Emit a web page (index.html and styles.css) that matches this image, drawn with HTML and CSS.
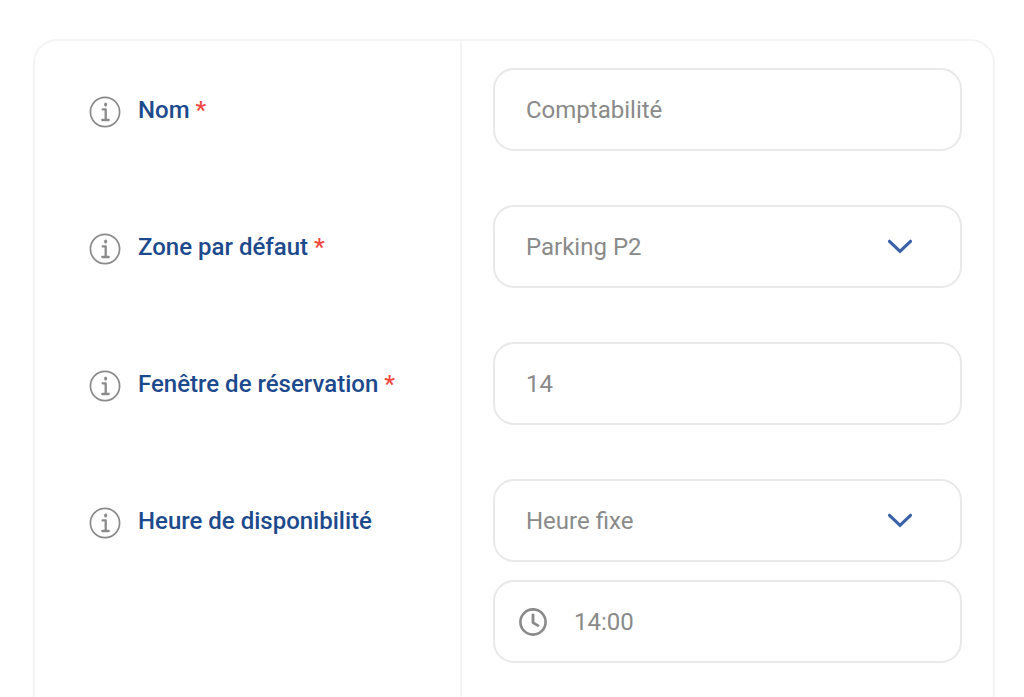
FILE: index.html
```html
<!DOCTYPE html>
<html lang="fr">
<head>
<meta charset="utf-8">
<meta name="viewport" content="width=device-width, initial-scale=1">
<title>Comptabilité</title>
<link rel="stylesheet" href="styles.css">
</head>
<body>
<svg class="sprite" aria-hidden="true">
  <symbol id="info" viewBox="0 0 32 32">
    <circle cx="16" cy="16" r="14.6" fill="none" stroke="currentColor" stroke-width="1.7"/>
    <ellipse cx="16.6" cy="8.6" rx="1.5" ry="2.1" fill="currentColor"/>
    <path d="M13.7 13.4h3v10.2M13.3 24h6.400" fill="none" stroke="currentColor" stroke-width="2.3" stroke-linecap="round" stroke-linejoin="round"/>
  </symbol>
  <symbol id="chevron" viewBox="0 0 26 16">
    <path d="M2.5 2.3L13 12.300 23.500 2.300" fill="none" stroke="currentColor" stroke-width="3.2" stroke-linecap="round"/>
  </symbol>
  <symbol id="clock" viewBox="0 0 28 28">
    <circle cx="14" cy="14" r="12.6" fill="none" stroke="currentColor" stroke-width="2.6"/>
    <path d="M14 6.8v7.8l5 3" fill="none" stroke="currentColor" stroke-width="2.8" stroke-linecap="round" stroke-linejoin="round"/>
  </symbol>
</svg>
<form class="card">
  <div class="row">
    <div class="label-cell">
      <svg class="info"><use href="#info"/></svg>
      <label class="label" for="nom">Nom <span class="required">*</span></label>
    </div>
    <div class="field-cell">
      <input class="control" id="nom" type="text" value="Comptabilité">
    </div>
  </div>
  <div class="row">
    <div class="label-cell">
      <svg class="info"><use href="#info"/></svg>
      <label class="label" for="zone">Zone par défaut <span class="required">*</span></label>
    </div>
    <div class="field-cell">
      <div class="field">
        <select class="control" id="zone"><option>Parking P2</option></select>
        <svg class="chevron"><use href="#chevron"/></svg>
      </div>
    </div>
  </div>
  <div class="row">
    <div class="label-cell">
      <svg class="info"><use href="#info"/></svg>
      <label class="label" for="fenetre">Fenêtre de réservation <span class="required">*</span></label>
    </div>
    <div class="field-cell">
      <input class="control" id="fenetre" type="text" inputmode="numeric" value="14">
    </div>
  </div>
  <div class="row row-last">
    <div class="label-cell">
      <svg class="info"><use href="#info"/></svg>
      <label class="label" for="dispo">Heure de disponibilité</label>
    </div>
    <div class="field-cell">
      <div class="field">
        <select class="control" id="dispo"><option>Heure fixe</option></select>
        <svg class="chevron"><use href="#chevron"/></svg>
      </div>
      <div class="field">
        <input class="control control-time" id="heure" type="text" value="14:00" aria-label="Heure">
        <svg class="clock"><use href="#clock"/></svg>
      </div>
    </div>
  </div>
</form>
</body>
</html>
```
FILE: styles.css
```css
* {
  box-sizing: border-box;
}

body {
  margin: 0;
  min-height: 100vh;
  padding: 39px 29px 0 33px;
  display: flex;
  background: #fff;
  font-family: Roboto, "Liberation Sans", sans-serif;
  font-size: 24px;
  line-height: 32px;
}

.sprite {
  position: absolute;
  width: 0;
  height: 0;
}

.card {
  flex: 1;
  display: flex;
  flex-direction: column;
  border: 2px solid #f4f4f4;
  border-bottom: 0;
  border-radius: 24px 24px 0 0;
}

.row {
  display: grid;
  grid-template-columns: 427px minmax(0, 1fr);
}

.row-last {
  flex: 1;
}

.label-cell {
  display: flex;
  align-items: flex-start;
  gap: 17px;
  padding: 53px 16px 0 54px;
  border-right: 2px solid #f4f4f4;
}

.info {
  flex: none;
  width: 32px;
  height: 32px;
  margin-top: 2px;
  color: #8a8a8a;
}

.label {
  color: #1d4a8c;
  font-weight: 500;
}

.required {
  color: #f0483e;
}

.field-cell {
  display: flex;
  flex-direction: column;
  gap: 18px;
  padding: 27px 31px;
}

.field {
  position: relative;
}

.control {
  display: block;
  width: 100%;
  height: 83px;
  margin: 0;
  padding: 0 31px;
  border: 2px solid #e9e9e9;
  border-radius: 21px;
  background: #fff;
  color: #8a8a8a;
  font: inherit;
  appearance: none;
}

.control:focus {
  outline: none;
  border-color: #3b62a6;
}

.control-time {
  padding-left: 79px;
}

.chevron,
.clock {
  position: absolute;
  top: 0;
  bottom: 0;
  margin: auto 0;
  pointer-events: none;
}

.chevron {
  right: 49px;
  width: 26px;
  height: 16px;
  color: #3b62a6;
}

.clock {
  left: 26px;
  width: 28px;
  height: 28px;
  color: #8a8a8a;
}
```
